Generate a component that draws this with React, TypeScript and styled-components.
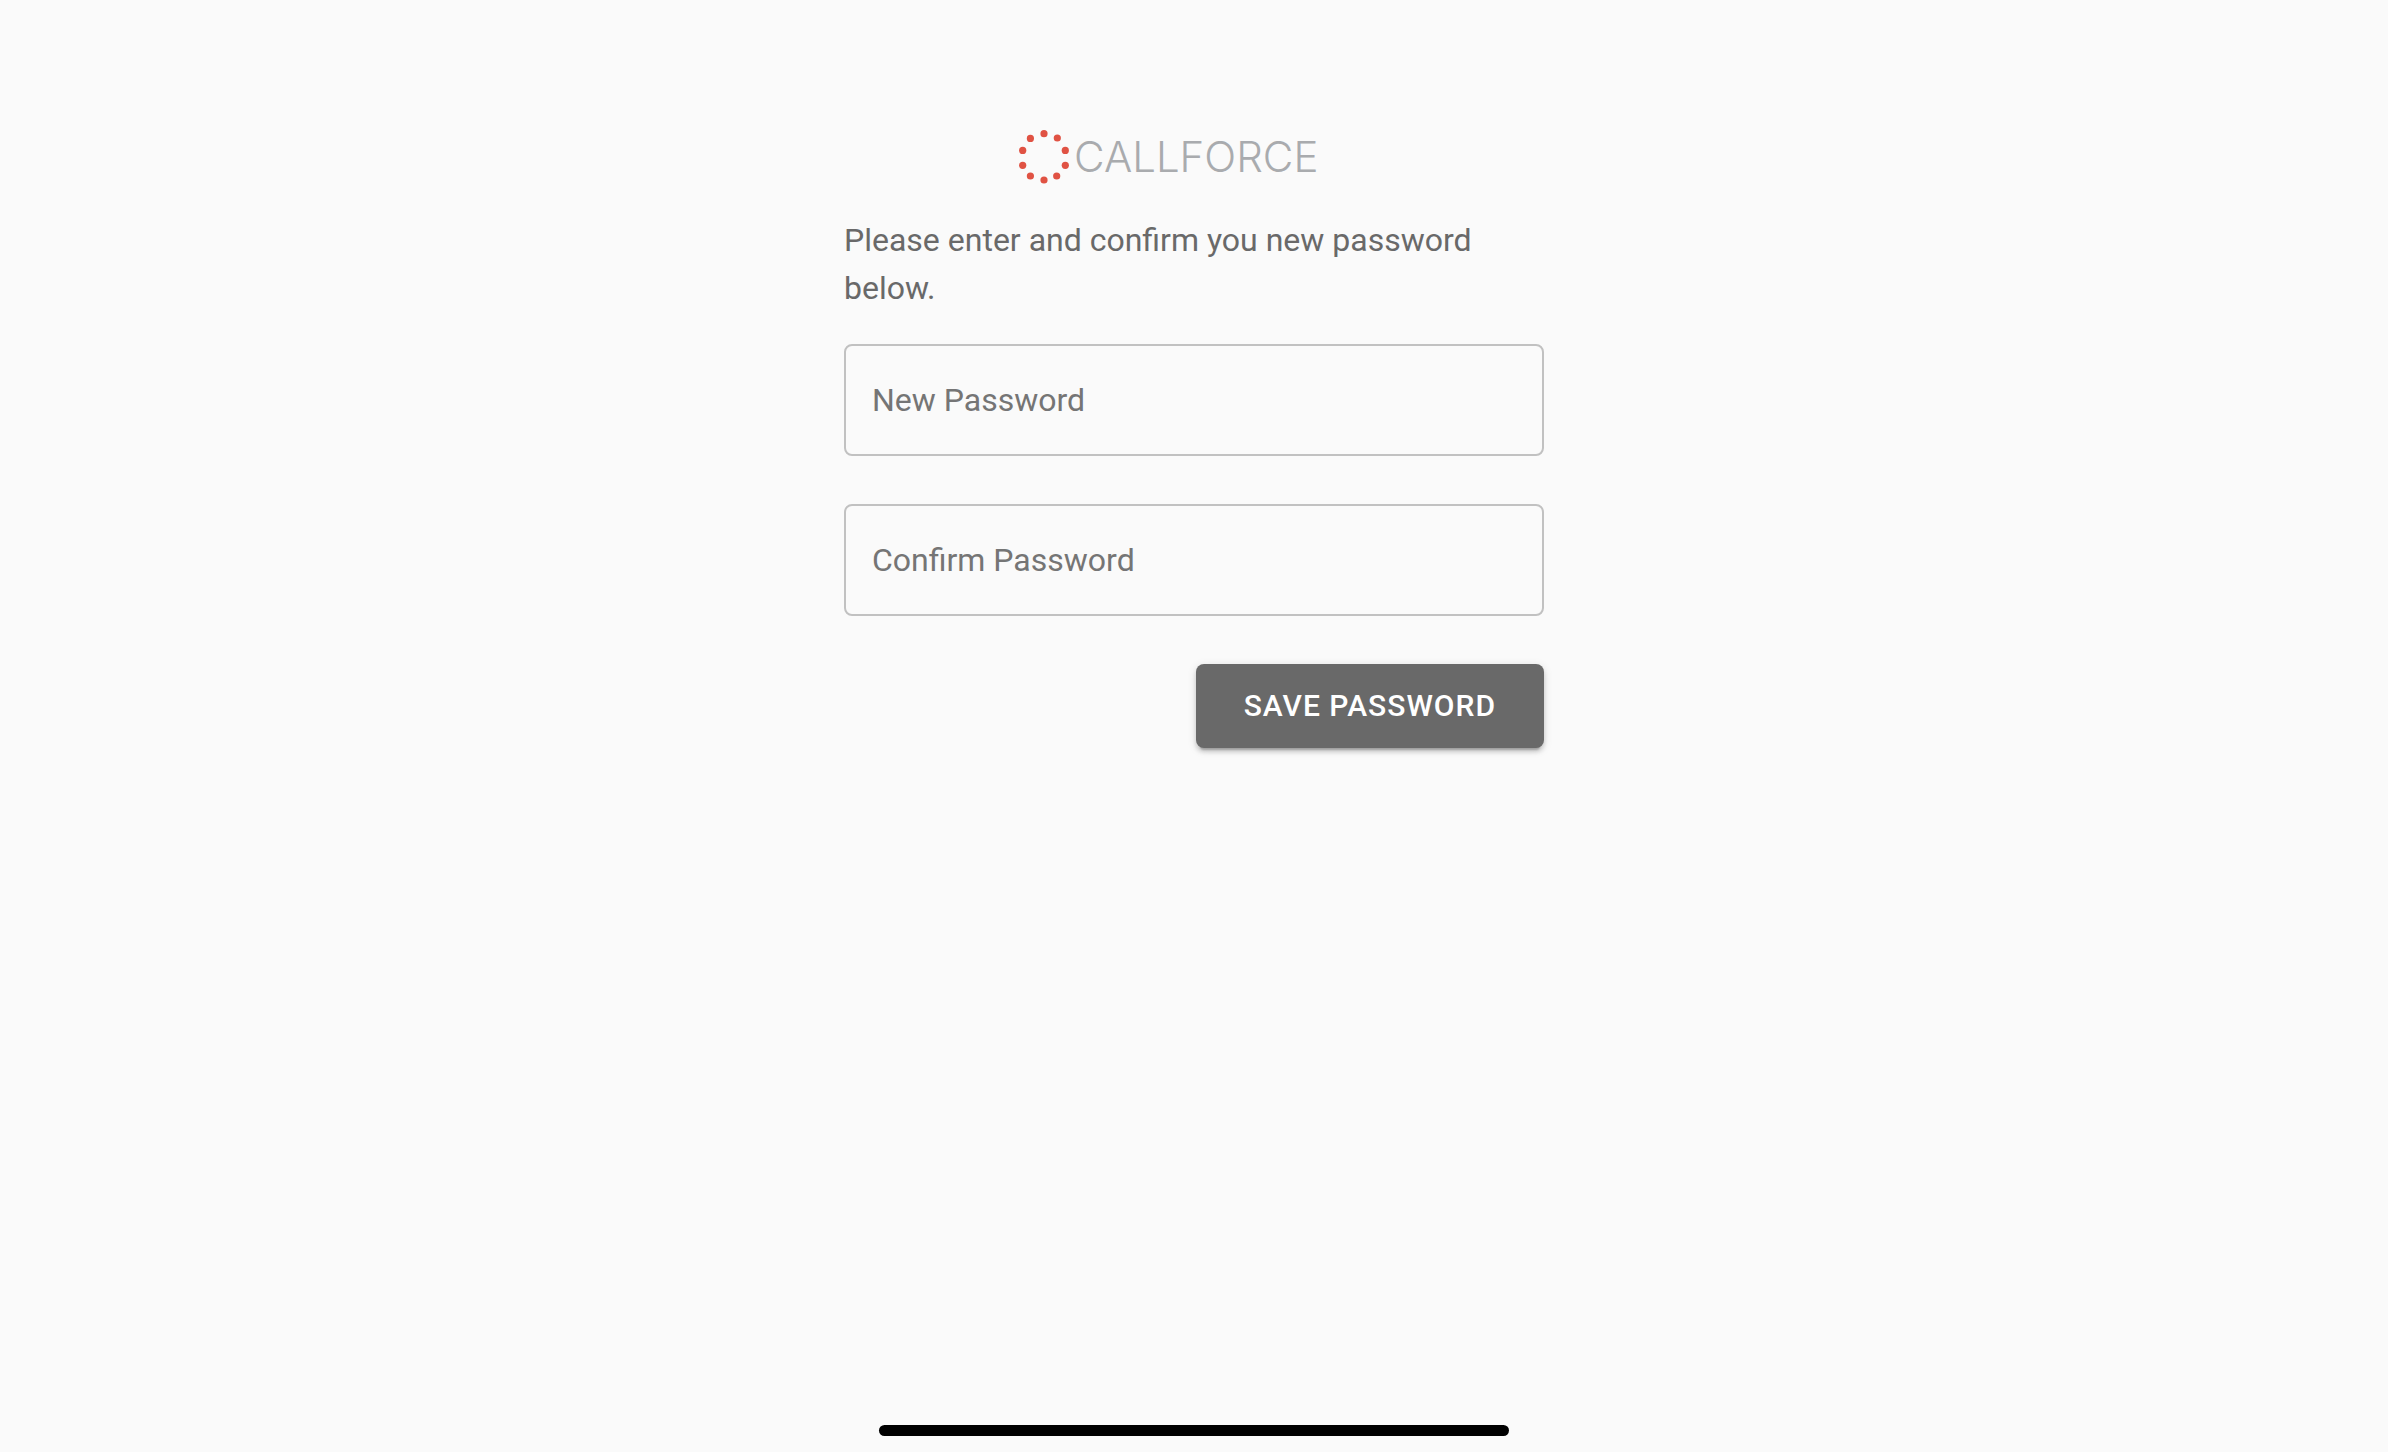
import React, { useState } from "react";
import styled, { createGlobalStyle } from "styled-components";

const GlobalStyle = createGlobalStyle`
  *, *::before, *::after { box-sizing: border-box; }
  body {
    margin: 0;
    background: #fafafa;
    color: #696969;
    font-family: Roboto, "Liberation Sans", sans-serif;
    font-size: 32px;
    line-height: 48px;
    -webkit-font-smoothing: antialiased;
  }
`;

const Page = styled.div`
  min-height: 100vh;
  display: flex;
  flex-direction: column;
  align-items: center;
  justify-content: space-between;
  padding: 128px 16px 16px;
`;

const Panel = styled.main`
  width: 100%;
  max-width: 700px;
  display: flex;
  flex-direction: column;
  gap: 32px;
`;

const Brand = styled.svg`
  display: block;
  align-self: center;
  width: 352px;
  height: 56px;
`;

const Wordmark = styled.text`
  fill: #a9abae;
  font-family: Inter, "DejaVu Sans", sans-serif;
  font-size: 42px;
  font-weight: 300;
`;

const Message = styled.p`
  margin: 0;
`;

const Form = styled.form`
  display: flex;
  flex-direction: column;
  gap: 48px;
`;

const Field = styled.div`
  display: grid;
  align-items: center;
`;

const FieldLabel = styled.label<{ $filled: boolean }>`
  grid-area: 1 / 1;
  justify-self: start;
  padding: 0 28px;
  color: #757575;
  pointer-events: none;
  opacity: ${(p) => (p.$filled ? 0 : 1)};
`;

const Input = styled.input`
  grid-area: 1 / 1;
  width: 100%;
  height: 112px;
  padding: 0 26px;
  border: 2px solid #c1c1c1;
  border-radius: 8px;
  background: transparent;
  color: #212121;
  font: inherit;
  outline: none;

  &:focus { border-color: #696969; }
`;

const SaveButton = styled.button`
  align-self: flex-end;
  padding: 16px 48px;
  border: 0;
  border-radius: 8px;
  background: #696969;
  color: #fff;
  font-family: inherit;
  font-size: 30px;
  font-weight: 500;
  line-height: 52px;
  letter-spacing: 1px;
  text-transform: uppercase;
  cursor: pointer;
  box-shadow:
    0 6px 2px -4px rgba(0, 0, 0, 0.2),
    0 4px 4px 0 rgba(0, 0, 0, 0.14),
    0 2px 10px 0 rgba(0, 0, 0, 0.12);
`;

const HomeBar = styled.div`
  width: 630px;
  max-width: 100%;
  height: 11px;
  border-radius: 6px;
  background: #000;
`;

const DOTS = [
  [26, 4.7], [39.3, 9], [47.3, 21.4], [47.3, 36.3], [38.7, 47],
  [26, 51], [12.4, 47], [4.7, 36.3], [4.7, 21.4], [12.4, 9.4],
];

function Logo() {
  return (
    <Brand viewBox="0 -1 352 56" role="img" aria-label="Callforce">
      {DOTS.map(([x, y]) => (
        <circle key={`${x}-${y}`} cx={x} cy={y} r={3.6} fill="#e05243" />
      ))}
      <Wordmark x="56" y="43">CALLFORCE</Wordmark>
    </Brand>
  );
}

type PasswordFieldProps = {
  id: string;
  label: string;
  value: string;
  onChange: (value: string) => void;
};

function PasswordField({ id, label, value, onChange }: PasswordFieldProps) {
  return (
    <Field>
      <Input
        id={id}
        type="password"
        autoComplete="new-password"
        value={value}
        onChange={(e) => onChange(e.target.value)}
      />
      <FieldLabel htmlFor={id} $filled={value.length > 0}>{label}</FieldLabel>
    </Field>
  );
}

export default function App() {
  const [password, setPassword] = useState("");
  const [confirmation, setConfirmation] = useState("");

  return (
    <>
      <GlobalStyle />
      <Page>
        <Panel>
          <Logo />
          <Message>Please enter and confirm you new password below.</Message>
          <Form onSubmit={(e) => e.preventDefault()}>
            <PasswordField id="new-password" label="New Password" value={password} onChange={setPassword} />
            <PasswordField id="confirm-password" label="Confirm Password" value={confirmation} onChange={setConfirmation} />
            <SaveButton type="submit">Save Password</SaveButton>
          </Form>
        </Panel>
        <HomeBar />
      </Page>
    </>
  );
}
